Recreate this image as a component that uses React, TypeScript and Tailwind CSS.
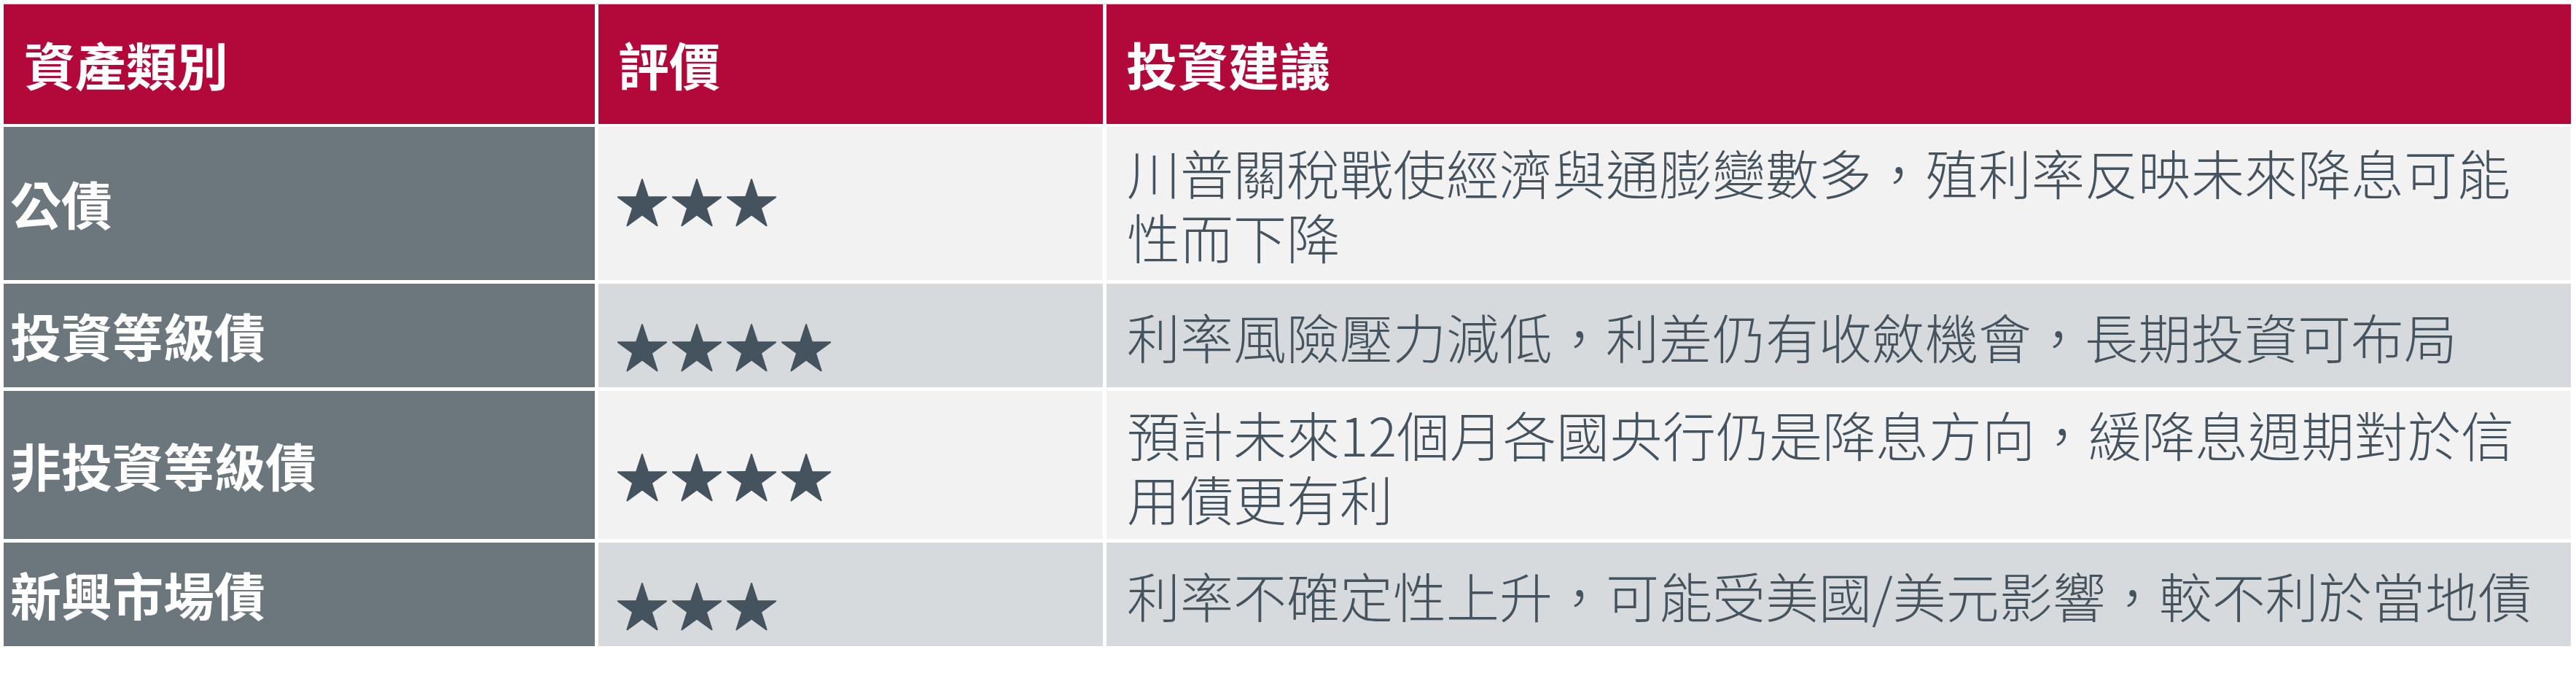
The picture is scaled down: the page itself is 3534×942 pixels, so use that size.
import React from "react";

const FONT = { fontFamily: '"Noto Sans CJK TC", "Noto Sans", sans-serif' };

function Star() {
  return (
    <svg width="68" height="66" viewBox="0 0 68 66" className="shrink-0">
      <polygon
        points="34,1 41.94,25.08 67.29,25.18 46.84,40.17 54.57,64.32 34,49.5 13.43,64.32 21.16,40.17 0.71,25.18 26.06,25.08"
        fill="#44535e"
        stroke="#44535e"
        strokeWidth="2"
        strokeLinejoin="round"
      />
    </svg>
  );
}

type RowData = {
  name: string;
  stars: number;
  text: string;
  mt: string;
  h: string;
  bg: string;
  pt: string;
};

const rows: RowData[] = [
  {
    name: "公債",
    stars: 3,
    text: "川普關稅戰使經濟與通膨變數多，殖利率反映未來降息可能性而下降",
    mt: "mt-[4px]",
    h: "h-[210px]",
    bg: "bg-[#f2f2f2]",
    pt: "pt-[71px]",
  },
  {
    name: "投資等級債",
    stars: 4,
    text: "利率風險壓力減低，利差仍有收斂機會，長期投資可布局",
    mt: "mt-[5px]",
    h: "h-[142px]",
    bg: "bg-[#d7dadd]",
    pt: "pt-[55px]",
  },
  {
    name: "非投資等級債",
    stars: 4,
    text: "預計未來12個月各國央行仍是降息方向，緩降息週期對於信用債更有利",
    mt: "mt-[5px]",
    h: "h-[203px]",
    bg: "bg-[#f2f2f2]",
    pt: "pt-[86px]",
  },
  {
    name: "新興市場債",
    stars: 3,
    text: "利率不確定性上升，可能受美國/美元影響，較不利於當地債",
    mt: "mt-[5px]",
    h: "h-[142px]",
    bg: "bg-[#d7dadd]",
    pt: "pt-[55px]",
  },
];

export default function App() {
  return (
    <div className="w-[3534px] h-[942px] bg-white overflow-hidden" style={FONT}>
      <div className="pt-[5px] pl-[5px] flex flex-col w-[3527px]">
        <div className="grid grid-cols-[811px_692px_2009px] gap-x-[5px] h-[165px] border-t border-[#d2d2d2] bg-white">
          <div className="bg-[#b2093a] flex items-center pl-[28px] text-white font-bold text-[70px] leading-none">
            資產類別
          </div>
          <div className="bg-[#b2093a] flex items-center pl-[27px] text-white font-bold text-[70px] leading-none">
            評價
          </div>
          <div className="bg-[#b2093a] flex items-center pl-[27px] text-white font-bold text-[70px] leading-none">
            投資建議
          </div>
        </div>
        {rows.map((r) => (
          <div
            key={r.name}
            className={`grid grid-cols-[811px_692px_2009px] gap-x-[5px] ${r.mt} ${r.h}`}
          >
            <div className="bg-[#6b767d] flex items-center pl-[9px] text-white font-bold text-[70px] leading-none">
              {r.name}
            </div>
            <div className={`${r.bg} ${r.pt} pl-[26px] flex items-start gap-[7px]`}>
              {Array.from({ length: r.stars }).map((_, i) => (
                <Star key={i} />
              ))}
            </div>
            <div
              className={`${r.bg} flex items-center pl-[28px] pr-[40px] text-[#44535e] font-light text-[73px] leading-[88px]`}
            >
              <p>{r.text}</p>
            </div>
          </div>
        ))}
      </div>
    </div>
  );
}
